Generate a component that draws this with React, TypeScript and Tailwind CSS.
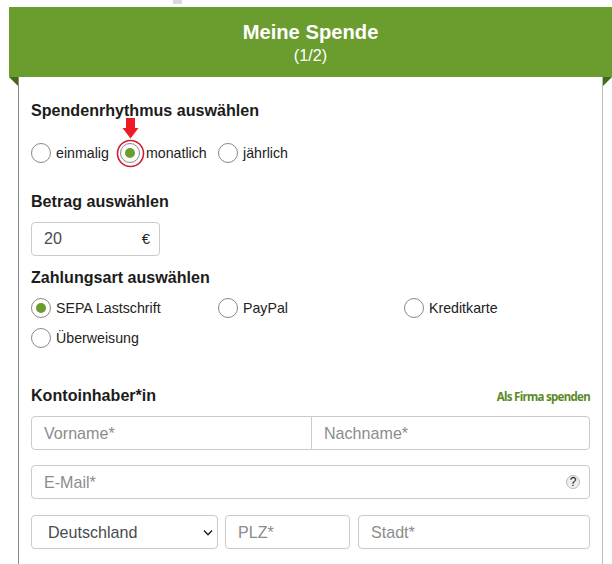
import clsx from "clsx";

interface RadioOptionProps {
  name: string;
  label: string;
  checked?: boolean;
  highlighted?: boolean;
  className?: string;
}

const fieldStyle =
  "block h-[34px] min-w-0 border border-[#cbcbcb] bg-white px-3 text-[16.1px] text-[#484c50] outline-none placeholder:text-[#8c8c8c] placeholder:opacity-100";

const headingStyle =
  "pb-[2px] text-[16.1px] leading-[18px] font-bold text-[#1c1c1c]";

function Marker() {
  return (
    <svg
      className="pointer-events-none absolute -top-[26px] -left-[5px]"
      width="30"
      height="50"
      viewBox="0 0 30 50"
    >
      <path d="M10 0h9v10h3.500l-8 10.500L6.500 10H10z" fill="#ed1c24" />
      <circle
        cx="14.500"
        cy="35.500"
        r="13"
        fill="none"
        stroke="#cf1f30"
        strokeWidth="1.6"
      />
    </svg>
  );
}

function RadioOption({
  name,
  label,
  checked = false,
  highlighted = false,
  className,
}: RadioOptionProps) {
  return (
    <label
      className={clsx(
        "flex h-5 items-center text-[14.2px] whitespace-nowrap text-[#222]",
        highlighted ? "gap-[6px]" : "gap-[5px]",
        className,
      )}
    >
      <span className="relative flex size-5 shrink-0 items-center justify-center rounded-full border border-[#888]">
        <input
          type="radio"
          name={name}
          defaultChecked={checked}
          className="peer absolute inset-0 opacity-0"
        />
        <span className="size-[10px] rounded-full bg-[#6a9c2e] opacity-0 peer-checked:opacity-100" />
        {highlighted && <Marker />}
      </span>
      <span className="leading-5">{label}</span>
    </label>
  );
}

function Header() {
  return (
    <header className="relative ml-[9px] h-[70px] bg-[#6b9c2e] pt-[13px] text-center text-white">
      <h1 className="text-[20.2px] leading-6 font-bold">Meine Spende</h1>
      <p className="text-[16.2px] leading-[22px]">(1/2)</p>
      {/* Folded ribbon ends */}
      <svg className="absolute top-full left-0" width="9" height="9">
        <path d="M0 0h9v9z" fill="#44691c" />
      </svg>
      <svg className="absolute top-full right-0" width="9" height="9">
        <path d="M0 0h9L0 9z" fill="#44691c" />
      </svg>
    </header>
  );
}

export default function App() {
  return (
    <div className="relative h-[564px] w-[612px] overflow-hidden bg-white pt-[7px] font-['Liberation_Sans',Arial,sans-serif]">
      <div className="absolute top-0 left-[173px] h-1 w-[9px] bg-[#d9d9d9]" />
      <Header />
      <form className="mr-[9px] ml-[18px] h-[487px] border-r border-l border-r-[#bdbdbd] border-l-[#8a8a8a] pt-6 pr-3 pl-3">
        <h2 className={headingStyle}>Spendenrhythmus auswählen</h2>
        <div className="mt-[22px] flex">
          <RadioOption name="rhythm" label="einmalig" className="w-[89px]" />
          <RadioOption
            name="rhythm"
            label="monatlich"
            checked
            highlighted
            className="w-[98px]"
          />
          <RadioOption name="rhythm" label="jährlich" />
        </div>

        <h2 className={clsx(headingStyle, "mt-[29px]")}>Betrag auswählen</h2>
        <div className="relative mt-[10px] w-[129px]">
          <input
            className={clsx(fieldStyle, "w-full rounded pb-[2px]")}
            defaultValue="20"
          />
          <span className="absolute top-[7px] right-[10px] text-[15px] leading-5 text-[#222]">
            €
          </span>
        </div>

        <h2 className={clsx(headingStyle, "mt-[12px]")}>
          Zahlungsart auswählen
        </h2>
        <div className="mt-[10px] grid grid-cols-[187px_186px_1fr] gap-y-[10px]">
          <RadioOption name="payment" label="SEPA Lastschrift" checked />
          <RadioOption name="payment" label="PayPal" />
          <RadioOption name="payment" label="Kreditkarte" />
          <RadioOption name="payment" label="Überweisung" />
        </div>

        <div className="mt-[38px] flex h-5 items-center justify-between">
          <h2 className={headingStyle}>Kontoinhaber*in</h2>
          <a className="pt-[2px] font-['Noto_Sans',sans-serif] text-[11.5px] leading-4 font-bold tracking-[-0.7px] text-[#5b8a26]">
            Als Firma spenden
          </a>
        </div>
        <div className="mt-[10px] flex">
          <input
            className={clsx(fieldStyle, "w-[281px] rounded-l")}
            placeholder="Vorname*"
          />
          <input
            className={clsx(fieldStyle, "-ml-px flex-1 rounded-r")}
            placeholder="Nachname*"
          />
        </div>
        <div className="relative mt-[15px]">
          <input
            className={clsx(fieldStyle, "w-full rounded")}
            placeholder="E-Mail*"
          />
          <span className="absolute top-[10px] right-[10px] flex size-[14px] items-center justify-center rounded-full border border-[#bbb] bg-[#eee] text-[12px] leading-none text-[#111]">
            ?
          </span>
        </div>
        <div className="mt-4 flex gap-[7px]">
          <div className="relative w-[187px]">
            <select
              className={clsx(fieldStyle, "w-full appearance-none rounded pl-4")}
            >
              <option>Deutschland</option>
            </select>
            <svg
              className="pointer-events-none absolute top-[14px] right-[5px]"
              width="10"
              height="8"
              viewBox="0 0 10 8"
            >
              <path
                d="M1 1.500L5 5.700L9 1.500"
                fill="none"
                stroke="#222"
                strokeWidth="1.500"
              />
            </svg>
          </div>
          <input
            className={clsx(fieldStyle, "w-[125px] rounded")}
            placeholder="PLZ*"
          />
          <input
            className={clsx(fieldStyle, "ml-px flex-1 rounded")}
            placeholder="Stadt*"
          />
        </div>
      </form>
    </div>
  );
}
